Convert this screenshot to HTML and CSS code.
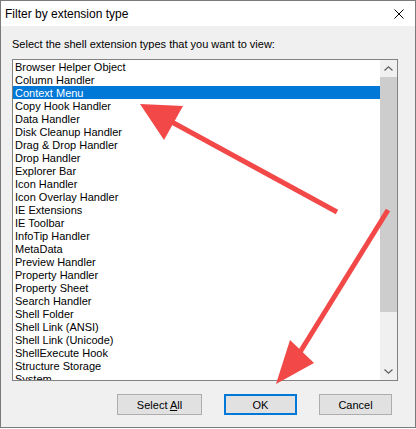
FILE: index.html
```html
<!DOCTYPE html>
<html lang="en">
<head>
<meta charset="utf-8">
<title>Filter by extension type</title>
<link rel="stylesheet" href="styles.css">
</head>
<body>
<div class="window">
  <div class="titlebar">
    <span class="title">Filter by extension type</span>
    <svg class="close" width="10" height="10" viewBox="0 0 10 10"><path d="M0.5 0.5 L9.5 9.5 M9.5 0.5 L0.5 9.5" stroke="#000" stroke-width="1" fill="none"/></svg>
  </div>
  <div class="content">
    <div class="label">Select the shell extension types that you want to view:</div>
    <div class="listbox">
      <ul class="items">
        <li>Browser Helper Object</li>
        <li>Column Handler</li>
        <li class="selected">Context Menu</li>
        <li>Copy Hook Handler</li>
        <li>Data Handler</li>
        <li>Disk Cleanup Handler</li>
        <li>Drag &amp; Drop Handler</li>
        <li>Drop Handler</li>
        <li>Explorer Bar</li>
        <li>Icon Handler</li>
        <li>Icon Overlay Handler</li>
        <li>IE Extensions</li>
        <li>IE Toolbar</li>
        <li>InfoTip Handler</li>
        <li>MetaData</li>
        <li>Preview Handler</li>
        <li>Property Handler</li>
        <li>Property Sheet</li>
        <li>Search Handler</li>
        <li>Shell Folder</li>
        <li>Shell Link (ANSI)</li>
        <li>Shell Link (Unicode)</li>
        <li>ShellExecute Hook</li>
        <li>Structure Storage</li>
        <li>System</li>
      </ul>
      <div class="scrollbar">
        <div class="sb-btn"><svg width="9" height="5" viewBox="0 0 9 5"><path d="M0.5 4.5 L4.5 0.8 L8.5 4.5" stroke="#606060" stroke-width="1.2" fill="none"/></svg></div>
        <div class="sb-track"><div class="sb-thumb"></div></div>
        <div class="sb-btn"><svg width="9" height="5" viewBox="0 0 9 5"><path d="M0.5 0.5 L4.5 4.2 L8.5 0.5" stroke="#606060" stroke-width="1.2" fill="none"/></svg></div>
      </div>
    </div>
    <div class="buttons">
      <button class="btn btn-wide">Select <u>A</u>ll</button>
      <button class="btn btn-default">OK</button>
      <button class="btn">Cancel</button>
    </div>
  </div>
</div>
<svg class="annotations" width="416" height="429" viewBox="0 0 416 429">
  <g fill="#f24848" stroke="#f24848">
    <line x1="170" y1="121" x2="337" y2="212" stroke-width="5"/>
    <polygon points="140,104 183,106 164,140" stroke="none"/>
    <line x1="388" y1="210" x2="297" y2="357" stroke-width="5"/>
    <polygon points="276,384 290,340 314,363" stroke="none"/>
  </g>
</svg>
</body>
</html>
```

FILE: styles.css
```css
* { box-sizing: border-box; }

html, body {
  margin: 0;
  padding: 0;
  background: #ffffff;
}

body {
  width: 416px;
  height: 429px;
  overflow: hidden;
  position: relative;
  font-family: "Liberation Sans", Arial, sans-serif;
  font-size: 11px;
  color: #000;
}

.window {
  width: 416px;
  height: 428px;
  border: 1px solid #7a7a7a;
  background: #f0f0f0;
  display: flex;
  flex-direction: column;
}

.titlebar {
  height: 25px;
  background: #ffffff;
  display: flex;
  align-items: center;
  justify-content: space-between;
  padding: 0 11px 0 4px;
}

.title {
  font-size: 12px;
}

.close {
  display: block;
  margin-top: 1px;
}

.content {
  flex: 1;
  display: flex;
  flex-direction: column;
  padding: 10px 17px 0 11px;
}

.label {
  line-height: 16px;
  margin-bottom: 7px;
}

.listbox {
  height: 322px;
  border: 1px solid #828282;
  background: #ffffff;
  display: flex;
  overflow: hidden;
}

.items {
  list-style: none;
  margin: 0;
  padding: 0;
  flex: 1;
  overflow: hidden;
}

.items li {
  height: 13px;
  line-height: 13px;
  padding: 1px 0 0 2px;
  white-space: nowrap;
}

.items li.selected {
  background: #0078d7;
  color: #ffffff;
}

.scrollbar {
  width: 17px;
  background: #f0f0f0;
  display: flex;
  flex-direction: column;
}

.sb-btn {
  height: 17px;
  display: flex;
  align-items: center;
  justify-content: center;
}

.sb-btn svg { display: block; }

.sb-track {
  flex: 1;
}

.sb-thumb {
  height: 235px;
  background: #cdcdcd;
}

.buttons {
  display: flex;
  justify-content: flex-end;
  gap: 22px;
  margin-top: 13px;
  margin-right: 6px;
}

.btn {
  width: 73px;
  height: 21px;
  padding: 0;
  font-family: inherit;
  font-size: 11px;
  color: #000;
  background: #e1e1e1;
  border: 1px solid #adadad;
  border-radius: 0;
}

.btn-wide { width: 85px; }

.btn-default {
  border: 2px solid #0078d7;
}

.annotations {
  position: absolute;
  left: 0;
  top: 0;
  pointer-events: none;
}
```
